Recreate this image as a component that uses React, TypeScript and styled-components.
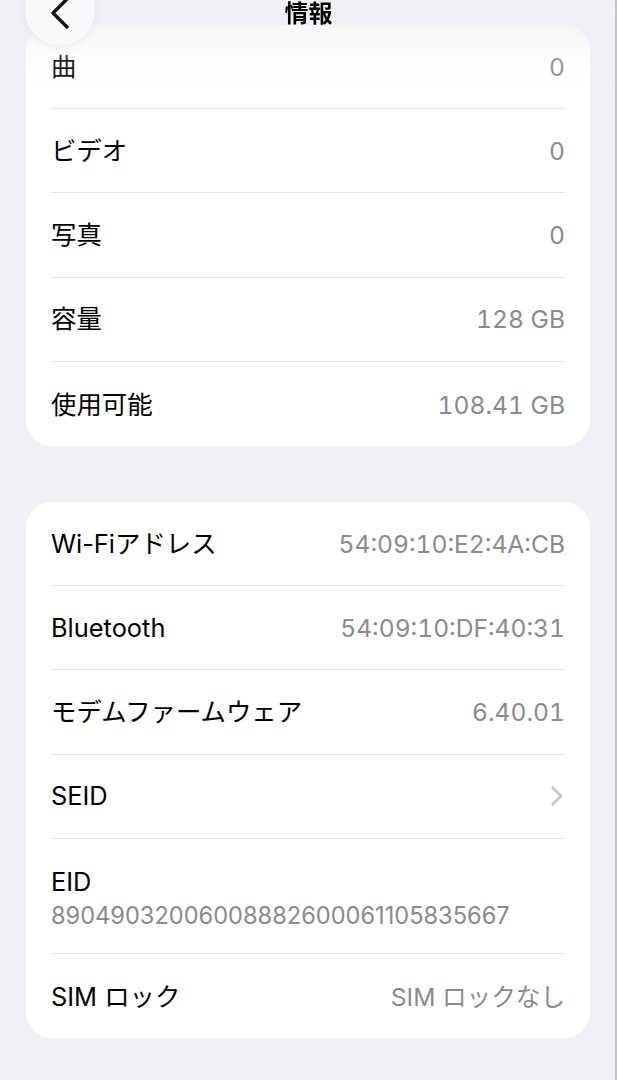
import React from 'react';
import styled, { createGlobalStyle } from 'styled-components';

const GlobalStyle = createGlobalStyle`
  html, body {
    margin: 0;
    padding: 0;
    background: #f0f0f5;
  }
  body {
    font-family: Inter, "Noto Sans CJK JP", sans-serif;
    -webkit-font-smoothing: antialiased;
  }
`;

const Page = styled.div`
  min-height: 100vh;
  box-sizing: border-box;
  padding: 25px 25px 40px 26px;
  display: flex;
  flex-direction: column;
  gap: 56px;
  border-right: 2px solid #c4c4ca;
`;

const TopFade = styled.div`
  position: fixed;
  top: 0;
  left: 0;
  right: 2px;
  height: 100px;
  pointer-events: none;
  background: linear-gradient(
    to bottom,
    rgba(240, 240, 245, 0.95) 0%,
    rgba(240, 240, 245, 0.55) 30%,
    rgba(240, 240, 245, 0.15) 60%,
    rgba(240, 240, 245, 0) 100%
  );
`;

const BackButton = styled.button`
  position: fixed;
  left: 25px;
  top: -25px;
  width: 70px;
  height: 70px;
  border: none;
  border-radius: 50%;
  background: rgba(250, 250, 252, 0.95);
  box-shadow: 0 2px 10px rgba(0, 0, 0, 0.06);
  display: flex;
  align-items: flex-end;
  justify-content: center;
  padding: 0 0 16px 0;
  cursor: pointer;
`;

const Title = styled.h1`
  position: fixed;
  top: 0;
  left: 0;
  right: 0;
  margin: 0;
  text-align: center;
  font-size: 24px;
  line-height: 28px;
  font-weight: 700;
  color: #000;
`;

const Card = styled.section`
  background: #fff;
  border-radius: 26px;
  padding: 0 25px;
`;

const Row = styled.div`
  height: 84.2px;
  box-sizing: border-box;
  display: flex;
  align-items: center;
  justify-content: space-between;
  border-bottom: 1px solid #e3e3e6;
  &:last-child {
    border-bottom: none;
    padding-top: 3px;
  }
`;

const StackRow = styled.div`
  box-sizing: border-box;
  height: 115px;
  padding: 26px 0 0;
  display: flex;
  flex-direction: column;
  border-bottom: 1px solid #e3e3e6;
`;

const Label = styled.span`
  font-size: 25.4px;
  line-height: 34px;
  color: #000;
`;

const Value = styled.span<{ $small?: boolean }>`
  font-size: ${(p) => (p.$small ? '23.6px' : '24.6px')};
  line-height: 34px;
  color: #8a8a8e;
  font-feature-settings: ${(p) => (p.$small ? 'normal' : "'tnum'")};
`;

const Chevron = styled.svg`
  width: 14px;
  height: 22px;
  margin-right: 1px;
`;

const mediaRows = [
  { label: '曲', value: '0' },
  { label: 'ビデオ', value: '0' },
  { label: '写真', value: '0' },
  { label: '容量', value: '128 GB' },
  { label: '使用可能', value: '108.41 GB' },
];

const networkRows = [
  { label: 'Wi-Fiアドレス', value: '54:09:10:E2:4A:CB' },
  { label: 'Bluetooth', value: '54:09:10:DF:40:31' },
  { label: 'モデムファームウェア', value: '6.40.01' },
];

export default function App() {
  return (
    <>
      <GlobalStyle />
      <Page>
        <Card>
          {mediaRows.map((r) => (
            <Row key={r.label}>
              <Label>{r.label}</Label>
              <Value>{r.value}</Value>
            </Row>
          ))}
        </Card>
        <Card>
          {networkRows.map((r) => (
            <Row key={r.label}>
              <Label>{r.label}</Label>
              <Value>{r.value}</Value>
            </Row>
          ))}
          <Row>
            <Label>SEID</Label>
            <Chevron viewBox="0 0 14 22" fill="none">
              <path d="M2.5 2.5 L11 11 L2.5 19.5" stroke="#c4c4c7" strokeWidth="2.6" strokeLinecap="round" strokeLinejoin="round" />
            </Chevron>
          </Row>
          <StackRow>
            <Label>EID</Label>
            <Value $small>89049032006008882600061105835667</Value>
          </StackRow>
          <Row>
            <Label>SIM ロック</Label>
            <Value>SIM ロックなし</Value>
          </Row>
        </Card>
      </Page>
      <TopFade />
      <Title>情報</Title>
      <BackButton type="button" aria-label="戻る">
        <svg width="20" height="32" viewBox="0 0 20 32" fill="none">
          <path d="M17 2 L3 16 L17 30" stroke="#111" strokeWidth="3.4" strokeLinecap="round" strokeLinejoin="round" />
        </svg>
      </BackButton>
    </>
  );
}
